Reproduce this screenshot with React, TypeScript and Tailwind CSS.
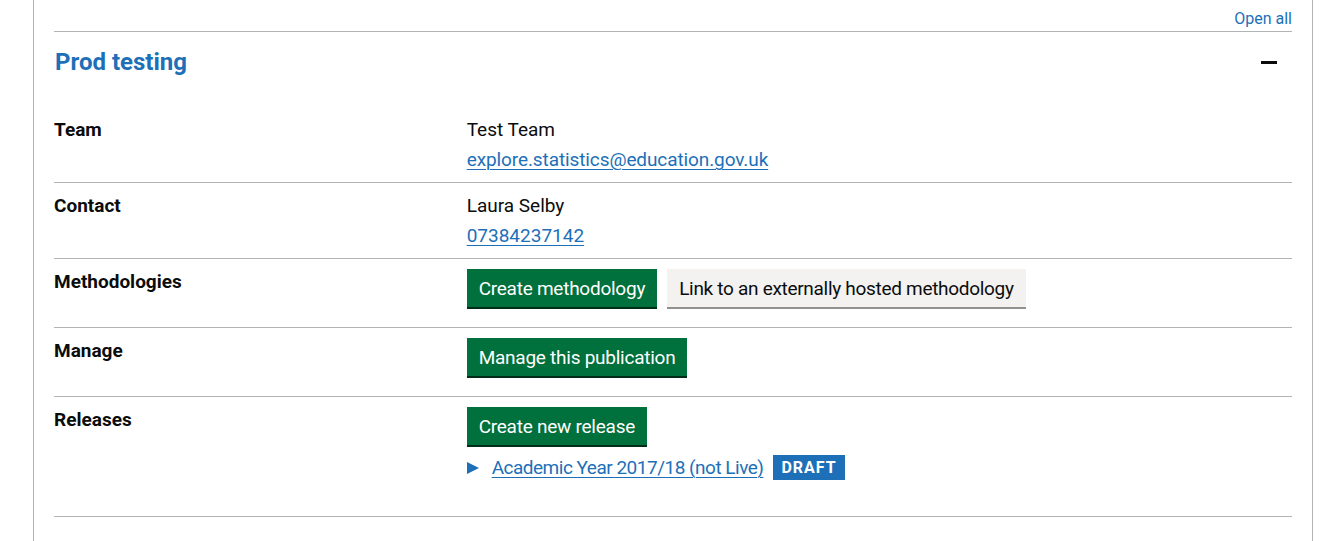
import React from "react";

const font = { fontFamily: "Roboto, 'Noto Sans', Arial, sans-serif" };

function Row({ label, children }: { label: string; children: React.ReactNode }) {
  return (
    <div className="flex border-b border-[#b1b4b6] pt-[10px] pb-[10px]">
      <div className="w-1/3 shrink-0 text-[19px] leading-[25px] font-bold text-[#0b0c0c] pr-[20px]">{label}</div>
      <div className="flex-1 text-[19px] leading-[25px] text-[#0b0c0c]">{children}</div>
    </div>
  );
}

function GreenButton({ children }: { children: React.ReactNode }) {
  return (
    <button className="bg-[#00703c] text-white text-[19px] leading-[19px] tracking-[-0.25px] px-[10px] pt-[8px] pb-[7px] border-2 border-transparent shadow-[0_2px_0_#002d18] h-[38px]">
      {children}
    </button>
  );
}

export default function App() {
  return (
    <div className="bg-white min-h-[541px] w-full" style={font}>
      <div className="ml-[33px] mr-[19px] border-x border-[#b1b4b6] px-[20px] min-h-[541px]">
        <div className="flex justify-end pt-[9px] pb-[2px]">
          <span className="text-[16px] leading-[20px] text-[#1d70b8]">Open all</span>
        </div>
        <div className="border-t border-[#b1b4b6]">
          <div className="flex items-center justify-between pt-[15px] pb-[15px]">
            <h2 className="text-[24px] leading-[30px] font-bold text-[#1d70b8] ml-[1px]">Prod testing</h2>
            <span className="block w-[16px] h-[3px] bg-[#0b0c0c] mr-[15px]"></span>
          </div>
          <div className="pt-[15px]">
            <Row label="Team">
              <div>Test Team</div>
              <div className="mt-[5px]">
                <a className="text-[#1d70b8] underline underline-offset-[3px] decoration-1 tracking-[-0.1px]">explore.statistics@education.gov.uk</a>
              </div>
            </Row>
            <Row label="Contact">
              <div>Laura Selby</div>
              <div className="mt-[5px]">
                <a className="text-[#1d70b8] underline underline-offset-[3px] decoration-1">07384237142</a>
              </div>
            </Row>
            <Row label="Methodologies">
              <div className="flex gap-[10px] mb-[10px]">
                <GreenButton>Create methodology</GreenButton>
                <button className="bg-[#f3f2f1] text-[#0b0c0c] text-[19px] leading-[19px] tracking-[-0.3px] px-[10px] pt-[8px] pb-[7px] border-2 border-transparent shadow-[0_2px_0_#929191] h-[38px]">
                  Link to an externally hosted methodology
                </button>
              </div>
            </Row>
            <Row label="Manage">
              <div className="mb-[10px]">
                <GreenButton>Manage this publication</GreenButton>
              </div>
            </Row>
            <Row label="Releases">
              <div className="mb-[10px]">
                <GreenButton>Create new release</GreenButton>
              </div>
              <div className="flex items-center mt-[1px] mb-[26px] h-[25px]">
                <svg width="12" height="12" viewBox="0 0 12 12" className="shrink-0">
                  <polygon points="0,0 12,6 0,12" fill="#1d70b8" />
                </svg>
                <a className="ml-[13px] text-[#1d70b8] underline underline-offset-[3px] decoration-1 tracking-[-0.5px]">Academic Year 2017/18 (not Live)</a>
                <span className="ml-[10px] flex items-center h-[25px] bg-[#1d70b8] text-white font-bold text-[16px] leading-[16px] tracking-[1px] px-[8px] uppercase">Draft</span>
              </div>
            </Row>
          </div>
        </div>
      </div>
    </div>
  );
}
